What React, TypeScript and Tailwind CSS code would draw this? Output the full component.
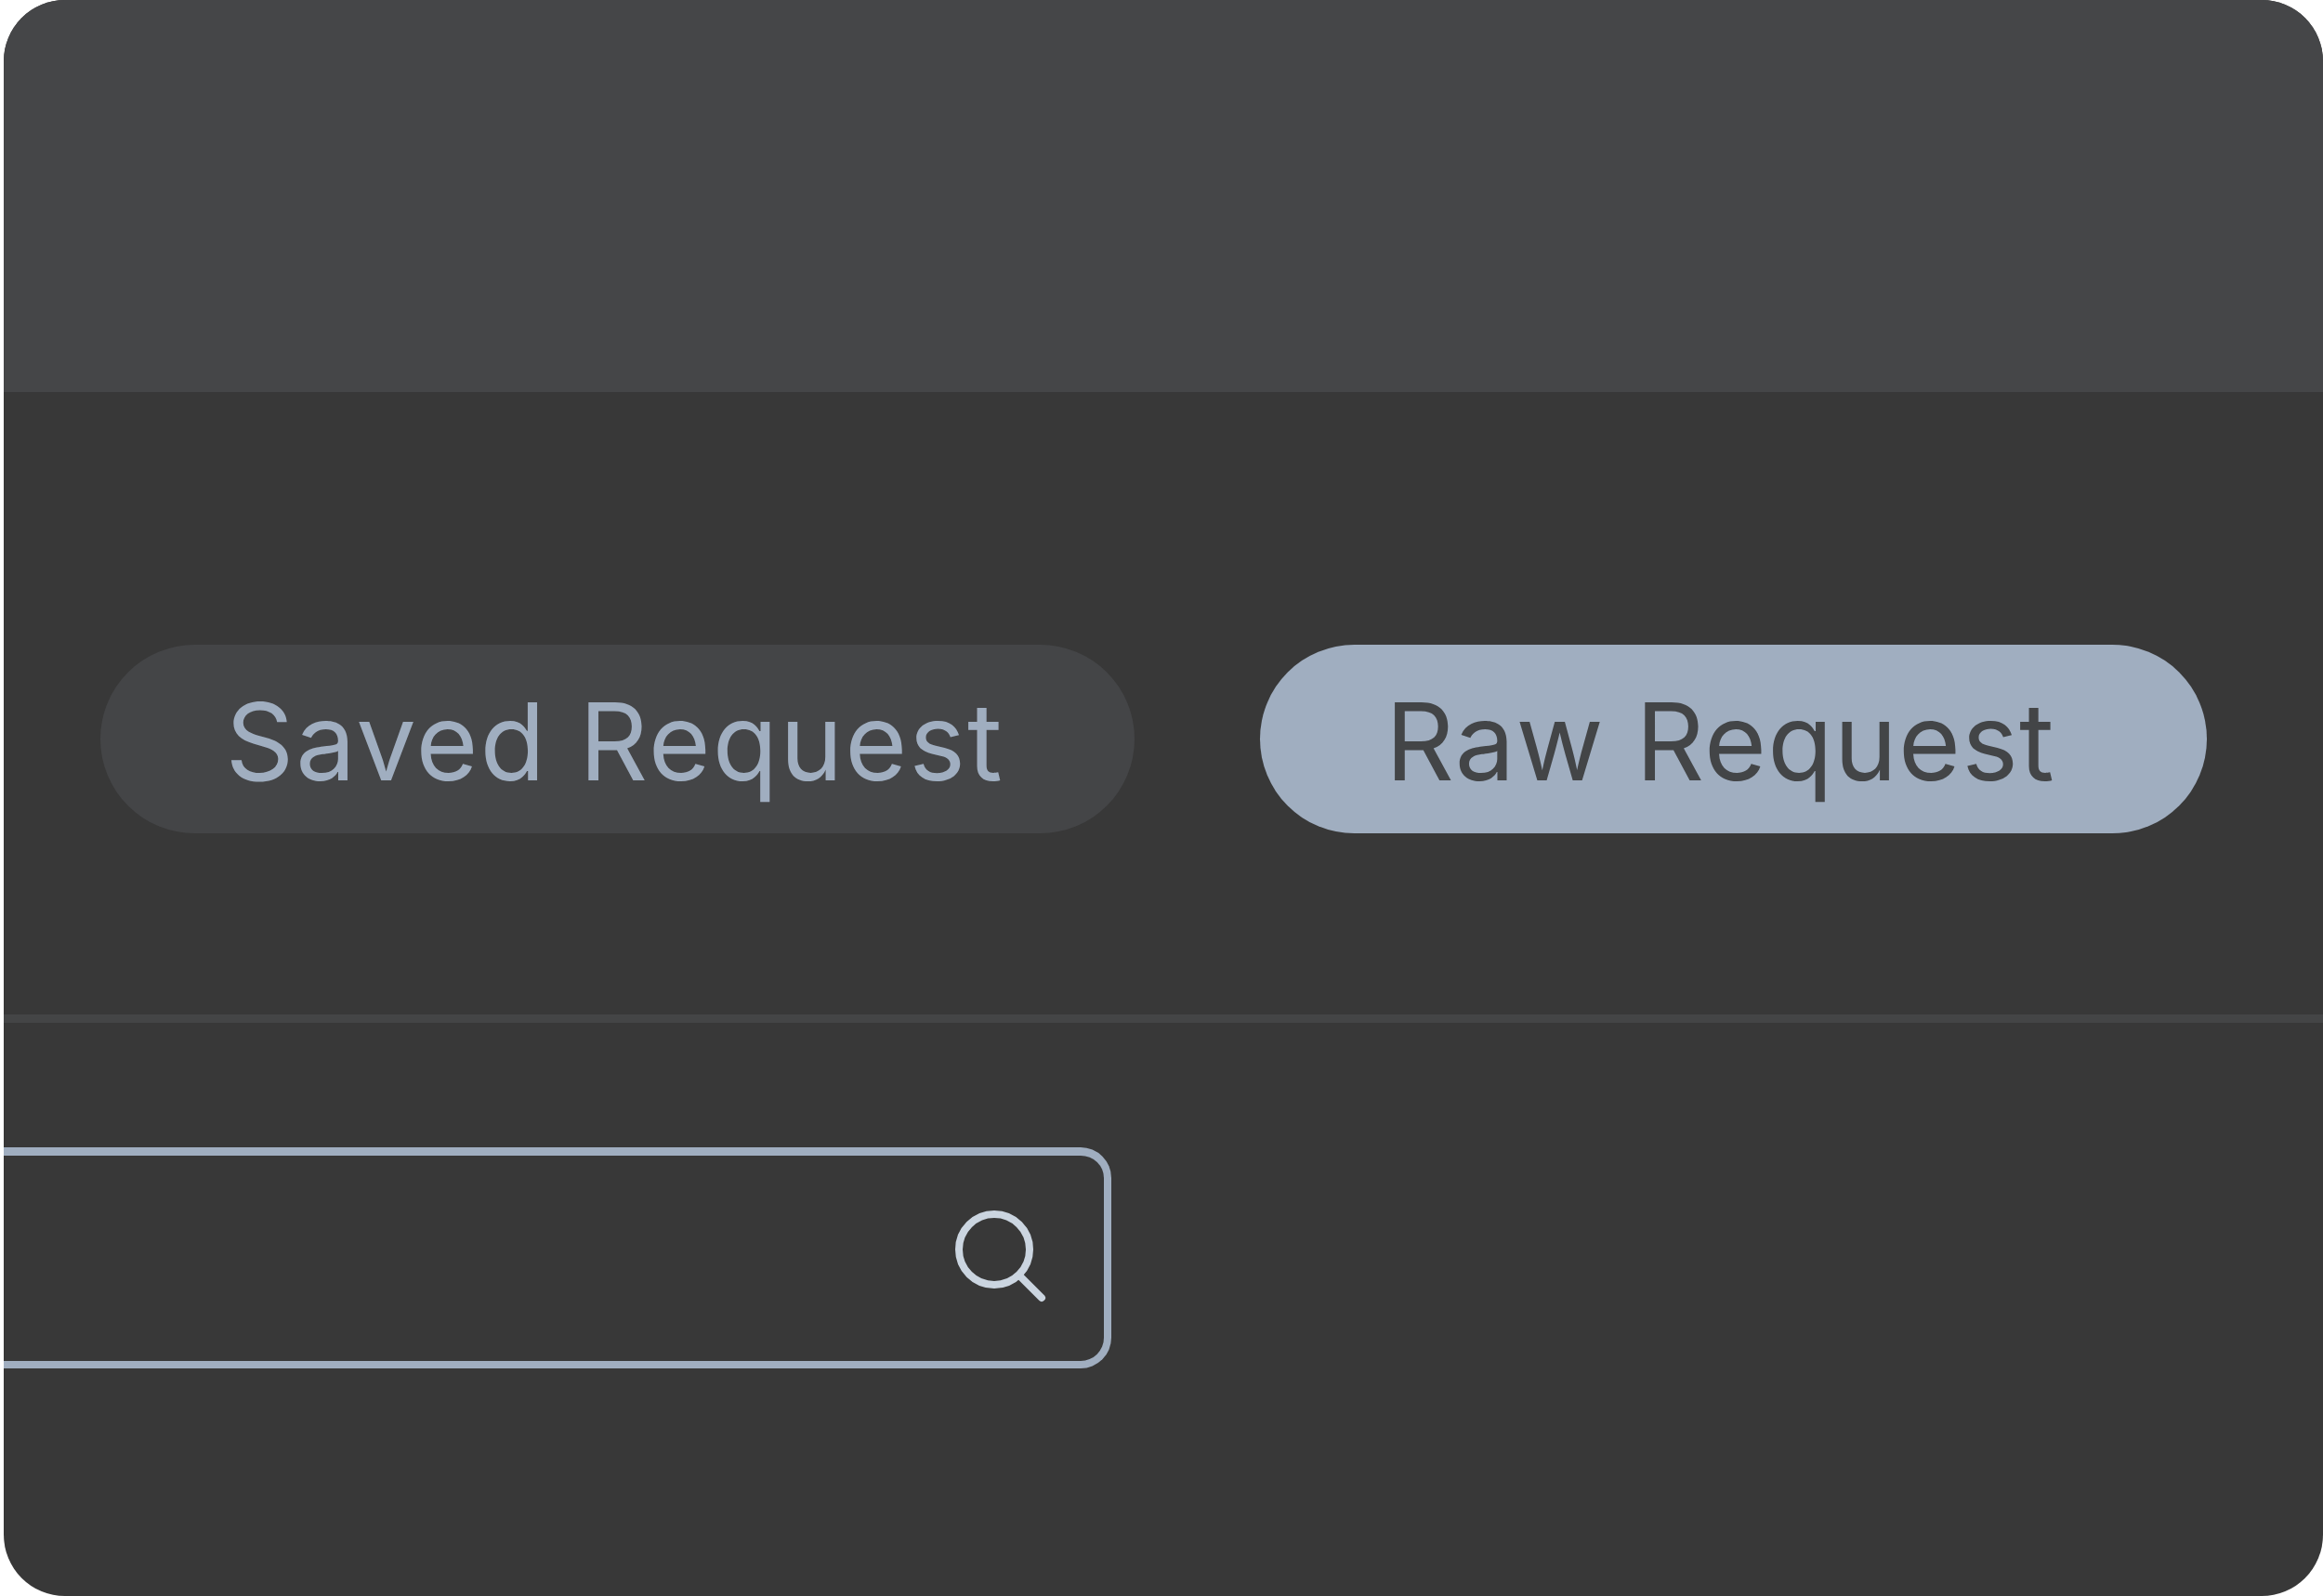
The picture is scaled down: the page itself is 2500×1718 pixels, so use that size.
export default function App() {
  return (
    <div className="h-[1718px] w-[2500px] bg-white pl-[4px] font-['Inter',sans-serif]">
      <div className="flex h-full flex-col overflow-hidden rounded-[66px] bg-[#383838]">
        <div className="h-[422px] shrink-0 bg-[#454648]" />

        <div className="mt-[272px] flex items-center gap-[135px] pl-[104px]">
          <button className="flex h-[203px] w-[1113px] items-center justify-center rounded-full bg-[#444547] pt-[6px] pr-[6px] text-[115px] leading-none font-normal tracking-[2px] text-[#a0aec0]">
            Saved Request
          </button>
          <button className="flex h-[203px] w-[1019px] items-center justify-center rounded-full bg-[#a0aec0] pt-[6px] pr-[28px] text-[115px] leading-none font-normal tracking-[1.2px] text-[#434547]">
            Raw Request
          </button>
        </div>

        <div className="mt-[195px] h-[9px] shrink-0 bg-[#444546]" />

        <div className="mt-[134px] flex h-[238px] w-[1192px] items-center justify-end rounded-r-[33px] border-t-[9px] border-r-[8px] border-b-[8px] border-[#a0aec0] pr-[61px]">
          <svg className="mt-[5px]" width="100" height="110" viewBox="0 0 100 110" fill="none" stroke="#cbd5e0" strokeWidth="8" strokeLinecap="round">
            <circle cx="43" cy="43" r="38" />
            <path d="M70 71 L94 95" />
          </svg>
        </div>
      </div>
    </div>
  );
}
